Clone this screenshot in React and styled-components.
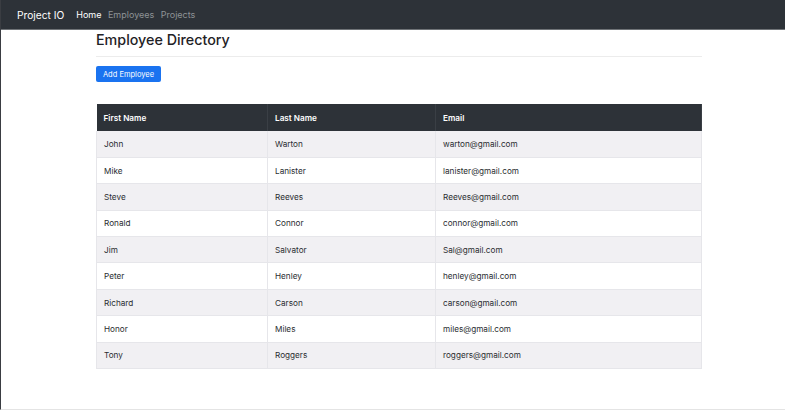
import React from "react";
import styled, { createGlobalStyle } from "styled-components";

const employees = [
  ["John", "Warton", "warton@gmail.com"],
  ["Mike", "Lanister", "lanister@gmail.com"],
  ["Steve", "Reeves", "Reeves@gmail.com"],
  ["Ronald", "Connor", "connor@gmail.com"],
  ["Jim", "Salvator", "Sal@gmail.com"],
  ["Peter", "Henley", "henley@gmail.com"],
  ["Richard", "Carson", "carson@gmail.com"],
  ["Honor", "Miles", "miles@gmail.com"],
  ["Tony", "Roggers", "roggers@gmail.com"],
];

const App = () => {
  return (
    <>
      <GlobalStyle />
      <Page>
        <Navbar>
          <Brand>Project IO</Brand>
          <NavLink active>Home</NavLink>
          <NavLink>Employees</NavLink>
          <NavLink>Projects</NavLink>
        </Navbar>
        <Container>
          <Title>Employee Directory</Title>
          <Rule />
          <Button>Add Employee</Button>
          <Table>
            <thead>
              <tr>
                <Th style={{ width: 171 }}>First Name</Th>
                <Th style={{ width: 168 }}>Last Name</Th>
                <Th>Email</Th>
              </tr>
            </thead>
            <tbody>
              {employees.map((e, i) => (
                <Row key={e[0]} striped={i % 2 === 0}>
                  <Td>{e[0]}</Td>
                  <Td>{e[1]}</Td>
                  <Td>{e[2]}</Td>
                </Row>
              ))}
            </tbody>
          </Table>
        </Container>
      </Page>
    </>
  );
};
export default App;

const GlobalStyle = createGlobalStyle`
  html, body {
    margin: 0;
    padding: 0;
    background: #ffffff;
    font-family: Inter, "Liberation Sans", Arial, sans-serif;
    color: #212529;
  }
`;

const Page = styled.div`
  width: 785px;
  height: 410px;
  box-sizing: border-box;
  border-left: 1px solid #3a3d42;
  border-bottom: 1px solid #e4e4e4;
  overflow: hidden;
`;

const Navbar = styled.div`
  height: 29px;
  background: #2d3238;
  display: flex;
  align-items: center;
  padding-left: 16px;
  border-bottom: 1px solid #6f7377;
`;

const Brand = styled.div`
  color: #ffffff;
  font-size: 10.2px;
  margin-right: 12px;
`;

const NavLink = styled.div`
  color: ${(p) => (p.active ? "#ffffff" : "#8e9296")};
  font-size: 9px;
  margin-right: 6.5px;
`;

const Container = styled.div`
  width: 606px;
  margin-left: 95px;
  padding-top: 1px;
`;

const Title = styled.div`
  font-size: 14.3px;
  font-weight: 500;
  line-height: 18px;
  color: #1f2226;
`;

const Rule = styled.div`
  height: 1px;
  background: #ececec;
  margin: 7px 0 9px;
`;

const Button = styled.div`
  display: flex;
  align-items: center;
  justify-content: center;
  width: 65px;
  height: 16px;
  border-radius: 2px;
  background: #1a73f0;
  color: #ffffff;
  font-size: 7.5px;
  margin-bottom: 22px;
`;

const Table = styled.table`
  width: 606px;
  border-collapse: collapse;
  font-size: 8.2px;
`;

const Th = styled.th`
  background: #2d3238;
  color: #ffffff;
  font-weight: 600;
  text-align: left;
  height: 27px;
  padding: 0 7px;
  box-sizing: border-box;
  border-right: 1px solid #3a3f45;
`;

const Row = styled.tr`
  background: ${(p) => (p.striped ? "#f1f0f3" : "#ffffff")};
  border-bottom: 1px solid #e6e6ea;
`;

const Td = styled.td`
  height: 26.4px;
  padding: 0 7px;
  box-sizing: border-box;
  color: #2a2d31;
  border-right: 1px solid #e6e6ea;
  &:first-child {
    border-left: 1px solid #e6e6ea;
  }
`;
